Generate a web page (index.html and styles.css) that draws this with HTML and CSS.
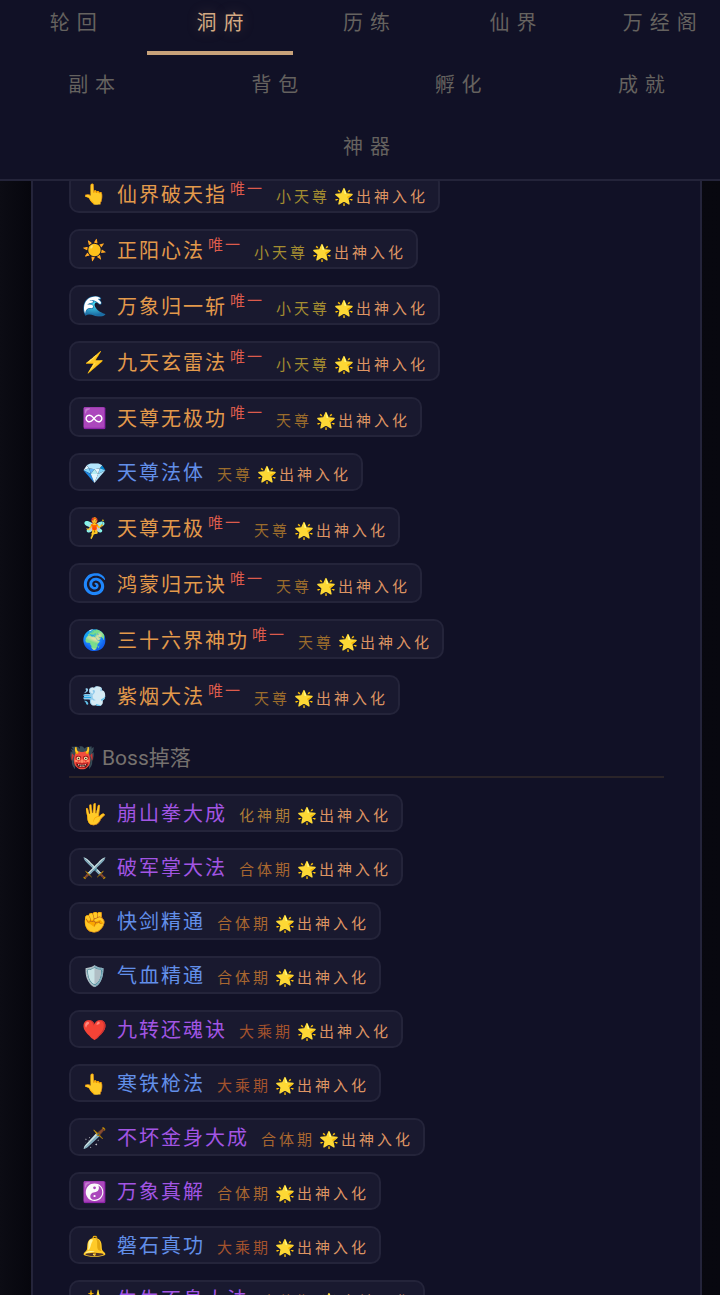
FILE: index.html
```html
<!DOCTYPE html>
<html lang="zh-CN">
<head>
<meta charset="utf-8">
<meta name="viewport" content="width=device-width, initial-scale=1">
<title>洞府</title>
<link rel="stylesheet" href="styles.css">
</head>
<body>
<div class="app">
  <nav class="tabs">
    <div class="tab-row">
      <button class="tab">轮回</button>
      <button class="tab active">洞府</button>
      <button class="tab">历练</button>
      <button class="tab">仙界</button>
      <button class="tab">万经阁</button>
    </div>
    <div class="tab-row">
      <button class="tab">副本</button>
      <button class="tab">背包</button>
      <button class="tab">孵化</button>
      <button class="tab">成就</button>
    </div>
    <div class="tab-row">
      <button class="tab">神器</button>
    </div>
  </nav>
  <main class="view">
    <section class="panel">
      <ul class="skills">
        <li class="skill unique"><span class="icon">👆</span><span class="name gold">仙界破天指</span><span class="only">唯一</span><span class="realm r-minor">小天尊</span><span class="star">🌟</span><span class="mastery">出神入化</span></li>
        <li class="skill unique"><span class="icon">☀️</span><span class="name gold">正阳心法</span><span class="only">唯一</span><span class="realm r-minor">小天尊</span><span class="star">🌟</span><span class="mastery">出神入化</span></li>
        <li class="skill unique"><span class="icon">🌊</span><span class="name gold">万象归一斩</span><span class="only">唯一</span><span class="realm r-minor">小天尊</span><span class="star">🌟</span><span class="mastery">出神入化</span></li>
        <li class="skill unique"><span class="icon">⚡</span><span class="name gold">九天玄雷法</span><span class="only">唯一</span><span class="realm r-minor">小天尊</span><span class="star">🌟</span><span class="mastery">出神入化</span></li>
        <li class="skill unique"><span class="icon">♾️</span><span class="name gold">天尊无极功</span><span class="only">唯一</span><span class="realm r-major">天尊</span><span class="star">🌟</span><span class="mastery">出神入化</span></li>
        <li class="skill"><span class="icon">💎</span><span class="name blue">天尊法体</span><span class="realm r-major">天尊</span><span class="star">🌟</span><span class="mastery">出神入化</span></li>
        <li class="skill unique"><span class="icon">🧚</span><span class="name gold">天尊无极</span><span class="only">唯一</span><span class="realm r-major">天尊</span><span class="star">🌟</span><span class="mastery">出神入化</span></li>
        <li class="skill unique"><span class="icon">🌀</span><span class="name gold">鸿蒙归元诀</span><span class="only">唯一</span><span class="realm r-major">天尊</span><span class="star">🌟</span><span class="mastery">出神入化</span></li>
        <li class="skill unique"><span class="icon">🌍</span><span class="name gold">三十六界神功</span><span class="only">唯一</span><span class="realm r-major">天尊</span><span class="star">🌟</span><span class="mastery">出神入化</span></li>
        <li class="skill unique"><span class="icon">💨</span><span class="name gold">紫烟大法</span><span class="only">唯一</span><span class="realm r-major">天尊</span><span class="star">🌟</span><span class="mastery">出神入化</span></li>
      </ul>
      <h2 class="group-title"><span class="group-icon">👹</span>Boss掉落</h2>
      <ul class="skills">
        <li class="skill"><span class="icon">🖐️</span><span class="name purple">崩山拳大成</span><span class="realm r-spirit">化神期</span><span class="star">🌟</span><span class="mastery">出神入化</span></li>
        <li class="skill"><span class="icon">⚔️</span><span class="name purple">破军掌大法</span><span class="realm r-union">合体期</span><span class="star">🌟</span><span class="mastery">出神入化</span></li>
        <li class="skill"><span class="icon">✊</span><span class="name blue">快剑精通</span><span class="realm r-union">合体期</span><span class="star">🌟</span><span class="mastery">出神入化</span></li>
        <li class="skill"><span class="icon">🛡️</span><span class="name blue">气血精通</span><span class="realm r-union">合体期</span><span class="star">🌟</span><span class="mastery">出神入化</span></li>
        <li class="skill"><span class="icon">❤️</span><span class="name purple">九转还魂诀</span><span class="realm r-great">大乘期</span><span class="star">🌟</span><span class="mastery">出神入化</span></li>
        <li class="skill"><span class="icon">👆</span><span class="name blue">寒铁枪法</span><span class="realm r-great">大乘期</span><span class="star">🌟</span><span class="mastery">出神入化</span></li>
        <li class="skill"><span class="icon">🗡️</span><span class="name purple">不坏金身大成</span><span class="realm r-union">合体期</span><span class="star">🌟</span><span class="mastery">出神入化</span></li>
        <li class="skill"><span class="icon">☯️</span><span class="name purple">万象真解</span><span class="realm r-union">合体期</span><span class="star">🌟</span><span class="mastery">出神入化</span></li>
        <li class="skill"><span class="icon">🔔</span><span class="name blue">磐石真功</span><span class="realm r-great">大乘期</span><span class="star">🌟</span><span class="mastery">出神入化</span></li>
        <li class="skill"><span class="icon">✨</span><span class="name purple">生生不息大法</span><span class="realm r-union">合体期</span><span class="star">🌟</span><span class="mastery">出神入化</span></li>
      </ul>
    </section>
  </main>
</div>
</body>
</html>
```
FILE: styles.css
```css
* { box-sizing: border-box; }

body {
  margin: 0;
  height: 100vh;
  overflow: hidden;
  background: #08080f;
  color: #75716f;
  font-family: "Noto Sans CJK SC", "Noto Color Emoji", sans-serif;
}

.app {
  display: flex;
  flex-direction: column;
  height: 100vh;
  margin-right: -13px;
}

.tabs {
  flex: none;
  margin-top: -7px;
  background: #111126;
  border-bottom: 2px solid #24243a;
}

.tab-row { display: flex; }

.tab {
  flex: 1;
  height: 62px;
  padding: 0 0 0 7px;
  border: 0;
  border-bottom: 4px solid transparent;
  background: none;
  color: #65625f;
  font: 20px/28px "Noto Sans CJK SC", sans-serif;
  letter-spacing: 7px;
}

.tab.active {
  color: #d3a983;
  border-bottom-color: #c8a27a;
  text-shadow: 0 0 14px rgba(211, 169, 131, 0.25);
}

.view {
  flex: 1;
  min-height: 0;
  overflow: hidden;
  padding: 0 31px;
  background: linear-gradient(90deg, #0c0c14, #06060d 32px, #08080f);
}

.panel {
  min-height: 100%;
  padding: 0 36px;
  background: #111126;
  border: solid #24243a;
  border-width: 0 2px;
}

.skills {
  display: flex;
  flex-direction: column;
  align-items: flex-start;
  gap: 16px;
  margin: 0;
  padding: 0;
  list-style: none;
}

.skills:first-child { margin-top: -8px; }

.skill {
  display: flex;
  align-items: baseline;
  height: 38px;
  padding: 0 10px 0 11px;
  border: 2px solid #24243a;
  border-radius: 10px;
  background: #19192f;
  line-height: 34px;
  white-space: nowrap;
}

.skill.unique { height: 40px; line-height: 38px; }

.icon { align-self: center; width: 35px; font-size: 20px; line-height: 34px; }

.name { font-size: 20px; letter-spacing: 2px; }

.only {
  align-self: flex-start;
  margin-left: 3px;
  color: #dc5b4c;
  font-size: 15px;
  line-height: 26px;
  letter-spacing: 2px;
}

.realm { margin-left: 12px; font-size: 15px; letter-spacing: 3px; }
.star { width: 22px; margin-left: 4px; font-size: 16px; }
.mastery { color: #dd9463; font-size: 15px; letter-spacing: 3px; }

.gold { color: #e39a4b; }
.blue { color: #628fe9; }
.purple { color: #a255e4; }

.r-minor { color: #a48d31; }
.r-major { color: #9b6c2c; }
.r-spirit { color: #ad7d37; }
.r-union { color: #a86730; }
.r-great { color: #a4532d; }

.group-title {
  display: flex;
  align-items: center;
  margin: 20px 0 16px;
  height: 43px;
  padding-top: 4px;
  border-bottom: 2px solid #2a2429;
  color: #76716e;
  font: 400 21px/36px Roboto, "Noto Sans CJK SC", sans-serif;
}

.group-icon { width: 33px; }
```
